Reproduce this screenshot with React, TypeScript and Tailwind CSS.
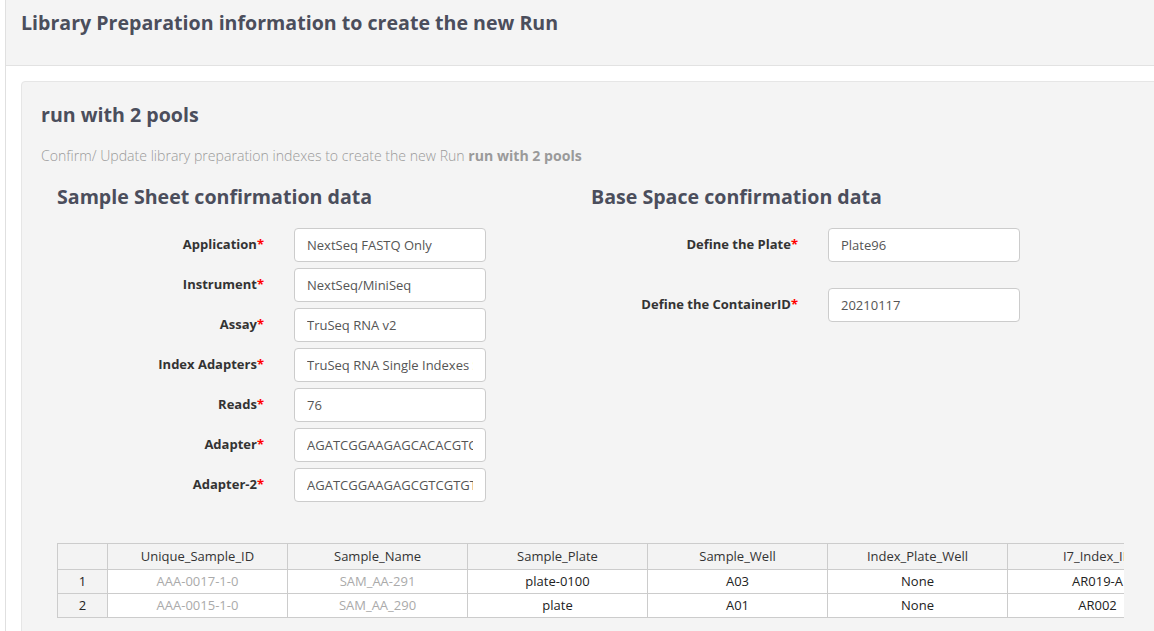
const sheetFields = [
  { label: "Application", value: "NextSeq FASTQ Only" },
  { label: "Instrument", value: "NextSeq/MiniSeq" },
  { label: "Assay", value: "TruSeq RNA v2" },
  { label: "Index Adapters", value: "TruSeq RNA Single Indexes Set A B" },
  { label: "Reads", value: "76" },
  { label: "Adapter", value: "AGATCGGAAGAGCACACGTCTGAACTCCAGTCAC" },
  { label: "Adapter-2", value: "AGATCGGAAGAGCGTCGTGTAGGGAAAGAGTGT" },
]

const baseFields = [
  { label: "Define the Plate", value: "Plate96" },
  { label: "Define the ContainerID", value: "20210117" },
]

const columns = ["Unique_Sample_ID", "Sample_Name", "Sample_Plate", "Sample_Well", "Index_Plate_Well", "I7_Index_ID"]

const rows = [
  ["AAA-0017-1-0", "SAM_AA-291", "plate-0100", "A03", "None", "AR019-A"],
  ["AAA-0015-1-0", "SAM_AA_290", "plate", "A01", "None", "AR002"],
]

function Field({ label, value }: { label: string; value: string }) {
  return (
    <div className="flex items-center gap-[30px]">
      <label className="w-[207px] text-right text-[13px] font-bold text-[#333]">
        {label}
        <span className="text-[#ff0000]">*</span>
      </label>
      <input
        readOnly
        value={value}
        className="h-[34px] w-[192px] rounded-[4px] border border-[#ccc] bg-white px-3 text-[13px] text-[#555] outline-none"
      />
    </div>
  )
}

export default function App() {
  return (
    <div className="w-[1154px] h-[631px] overflow-hidden bg-white font-['Open_Sans',sans-serif]">
      <div className="ml-[5px] h-full border-l border-[#e0e0e0]">
        <div className="h-[66px] border-b border-[#e2e2e2] bg-[#f4f4f4] pl-[15px] pt-[8px]">
          <h1 className="text-[19.6px] font-bold leading-[30px] text-[#4b4e5c]">
            Library Preparation information to create the new Run
          </h1>
        </div>
        <div className="pl-[15px] pt-[15px]">
          <div className="w-[1160px] rounded-[4px] border border-[#e6e6e6] bg-[#f4f4f4] pl-[19px] pt-[18px] pb-6">
            <h2 className="text-[19.6px] font-bold leading-[30px] text-[#4b4e5c]">run with 2 pools</h2>
            <p className="mt-[15px] text-[14.1px] font-light text-[#9a9a9a]">
              Confirm/ Update library preparation indexes to create the new Run{" "}
              <span className="font-bold">run with 2 pools</span>
            </p>
            <div className="mt-[18px] flex">
              <div className="w-[549px] pl-[16px]">
                <h3 className="text-[19.6px] font-bold leading-[26px] text-[#4b4e5c]">Sample Sheet confirmation data</h3>
                <div className="mt-[18px] flex flex-col gap-[6px]">
                  {sheetFields.map((f) => (
                    <Field key={f.label} label={f.label} value={f.value} />
                  ))}
                </div>
              </div>
              <div className="flex-1 pl-px">
                <h3 className="text-[19.6px] font-bold leading-[26px] text-[#4b4e5c]">Base Space confirmation data</h3>
                <div className="mt-[18px] flex flex-col gap-[26px]">
                  {baseFields.map((f) => (
                    <Field key={f.label} label={f.label} value={f.value} />
                  ))}
                </div>
              </div>
            </div>
            <div className="ml-[16px] mt-[41px] w-[1067px] overflow-hidden">
              <table className="w-[1130px] table-fixed border-collapse text-[13px]">
                <colgroup>
                  <col className="w-[50px]" />
                  {columns.map((c) => (
                    <col key={c} className="w-[180px]" />
                  ))}
                </colgroup>
                <thead>
                  <tr className="h-[26px] bg-[#f3f3f3] text-[#333]">
                    <th className="border border-[#ccc] font-normal"></th>
                    {columns.map((c) => (
                      <th key={c} className="border border-[#ccc] font-normal">
                        {c}
                      </th>
                    ))}
                  </tr>
                </thead>
                <tbody>
                  {rows.map((r, i) => (
                    <tr key={i} className="h-[24px]">
                      <td className="border border-[#ccc] bg-[#f3f3f3] text-center text-[#222]">{i + 1}</td>
                      {r.map((v, j) => (
                        <td
                          key={j}
                          className={
                            j < 2
                              ? "border border-[#ccc] bg-white text-center text-[#aaa]"
                              : "border border-[#ccc] bg-white text-center text-[#222]"
                          }
                        >
                          {v}
                        </td>
                      ))}
                    </tr>
                  ))}
                </tbody>
              </table>
            </div>
          </div>
        </div>
      </div>
    </div>
  )
}
